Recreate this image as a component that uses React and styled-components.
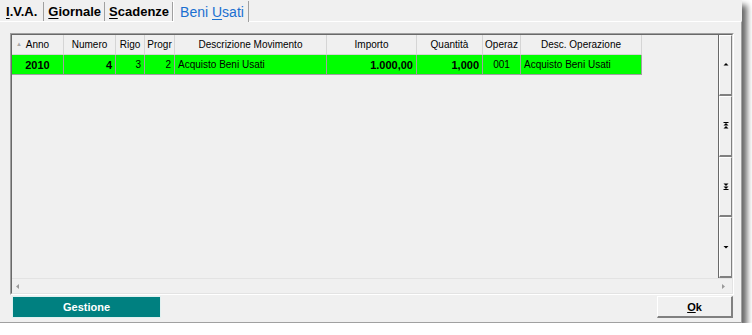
import React from 'react'
import styled, { createGlobalStyle } from 'styled-components'

const GlobalStyle = createGlobalStyle`
  html, body {
    margin: 0;
    padding: 0;
    background: #ffffff;
    font-family: "Liberation Sans", Arial, sans-serif;
  }
`

const Window = styled.div`
  width: 742px;
  height: 323px;
  background: #f0f0f0;
  box-shadow: 5px 5px 6px rgba(0, 0, 0, 0.6);
  display: flex;
  flex-direction: column;
`

const TabBar = styled.div`
  display: flex;
  align-items: flex-end;
  height: 21px;
  flex-shrink: 0;
  padding-left: 2px;
  box-sizing: border-box;
`

const Tab = styled.div`
  height: ${p => (p.$active ? '21px' : '19px')};
  box-sizing: border-box;
  display: flex;
  align-items: center;
  padding: ${p => (p.$active ? '0 4px 0 6px' : '0 3px 0 4px')};
  font-size: ${p => (p.$active ? '14px' : '13px')};
  font-weight: ${p => (p.$active ? 400 : 700)};
  color: ${p => (p.$active ? '#1a6fd0' : '#000000')};
  border-right: 1px solid #a0a0a0;
  border-left: ${p => (p.$active ? '1px solid #ffffff' : 'none')};
  background: ${p => (p.$active ? '#f0f0f0' : 'transparent')};
  margin-bottom: ${p => (p.$active ? '-1px' : '0')};
  position: relative;
  z-index: ${p => (p.$active ? 1 : 0)};
  white-space: pre;

  &:first-child {
    padding-left: 4px;
    padding-right: 6px;
  }

  u {
    text-decoration: underline;
    text-underline-offset: 2px;
  }
`

const Panel = styled.div`
  flex: 1;
  border-top: 1px solid #ffffff;
  border-right: 1px solid #a0a0a0;
  border-bottom: 1px solid #a0a0a0;
  padding: 11px 7px 4px 10px;
  display: flex;
  flex-direction: column;
  box-sizing: border-box;
`

const GridFrame = styled.div`
  height: 262px;
  flex-shrink: 0;
  box-sizing: border-box;
  border-top: 1px solid #a0a0a0;
  border-left: 1px solid #a0a0a0;
  border-right: 1px solid #ffffff;
  border-bottom: 1px solid #ffffff;
  display: flex;
`

const GridInner = styled.div`
  flex: 1;
  border-top: 1px solid #696969;
  border-left: 1px solid #696969;
  border-right: 1px solid #e3e3e3;
  border-bottom: 1px solid #e3e3e3;
  display: flex;
  flex-direction: column;
`

const GridBody = styled.div`
  flex: 1;
  display: flex;
  min-height: 0;
`

const TableArea = styled.div`
  flex: 1;
  font-size: 10px;
  color: #000;
`

const Row = styled.div`
  display: flex;
  height: 20px;
`

const HeadCell = styled.div`
  width: ${p => p.$w}px;
  box-sizing: border-box;
  display: flex;
  align-items: center;
  justify-content: center;
  border-right: 1px solid #d5d5d5;
  border-bottom: 1px solid #d5d5d5;
  background: #f0f0f0;
  position: relative;
  white-space: nowrap;
  overflow: hidden;
`

const SortMark = styled.span`
  position: absolute;
  left: 4px;
  top: 6px;
  font-size: 6px;
  color: #a8a8a8;
`

const Cell = styled.div`
  width: ${p => p.$w}px;
  box-sizing: border-box;
  display: flex;
  align-items: center;
  justify-content: ${p => p.$align || 'flex-start'};
  padding: 0 3px;
  background: #00ff00;
  border-right: 1px solid #a0a0a0;
  border-bottom: 1px solid #a0a0a0;
  font-weight: ${p => (p.$bold ? 700 : 400)};
  font-size: ${p => (p.$bold ? '11px' : '10px')};
  white-space: nowrap;
  overflow: hidden;
`

const VScroll = styled.div`
  width: 13px;
  display: flex;
  flex-direction: column;
  border-left: 1px solid #696969;
`

const ScrollButton = styled.div`
  flex: 1;
  box-sizing: border-box;
  border-top: 1px solid #ffffff;
  border-left: 1px solid #ffffff;
  border-right: 1px solid #808080;
  border-bottom: 2px solid #808080;
  background: #f0f0f0;
  display: flex;
  align-items: center;
  justify-content: center;
`

const HScroll = styled.div`
  height: 14px;
  border-top: 1px solid #e3e3e3;
  display: flex;
  align-items: center;
  justify-content: space-between;
  padding: 0 6px 0 4px;
  background: #f0f0f0;
`

const Footer = styled.div`
  display: flex;
  justify-content: space-between;
  margin-top: 1px;
  padding-left: 2px;
`

const GestioneButton = styled.button`
  width: 149px;
  height: 22px;
  background: #008080;
  color: #ffffff;
  border: 1px solid #e0f0f0;
  font-family: "Liberation Sans", Arial, sans-serif;
  font-size: 11px;
  font-weight: 700;
  padding: 0;
`

const OkButton = styled.button`
  width: 76px;
  height: 22px;
  background: #f0f0f0;
  color: #000;
  border-top: 1px solid #ffffff;
  border-left: 1px solid #ffffff;
  border-right: 2px solid #808080;
  border-bottom: 2px solid #808080;
  font-family: "Liberation Sans", Arial, sans-serif;
  font-size: 11px;
  font-weight: 700;
  padding: 0;
  margin-right: 1px;

  u {
    text-underline-offset: 1px;
  }
`

const Arrow = ({ dir, double }) => {
  const up = dir === 'up'
  const tri = y => (up ? `M0.5 ${y + 2.5} L3 ${y} L5.5 ${y + 2.5} Z` : `M0.5 ${y} L3 ${y + 2.5} L5.5 ${y} Z`)
  return (
    <svg width="6" height="7" viewBox="0 0 6 7">
      {double ? (
        <>
          <path d={tri(up ? 1 : 0.5)} fill="#000" />
          <path d={tri(up ? 4 : 3.5)} fill="#000" />
          <rect x="0.5" y={up ? 0 : 6} width="5" height="1" fill="#000" />
        </>
      ) : (
        <path d={tri(2)} fill="#000" />
      )}
    </svg>
  )
}

const SideArrow = ({ dir }) => (
  <svg width="4" height="7" viewBox="0 0 4 7">
    <path d={dir === 'left' ? 'M3 1 L0 3.5 L3 6 Z' : 'M0 1 L3 3.5 L0 6 Z'} fill="#9a9a9a" />
  </svg>
)

const columns = [
  { key: 'anno', label: 'Anno', w: 52, align: 'center', bold: true, sort: true },
  { key: 'numero', label: 'Numero', w: 52, align: 'flex-end', bold: true },
  { key: 'rigo', label: 'Rigo', w: 29, align: 'flex-end' },
  { key: 'progr', label: 'Progr', w: 30, align: 'flex-end' },
  { key: 'descr', label: 'Descrizione Movimento', w: 152 },
  { key: 'importo', label: 'Importo', w: 90, align: 'flex-end', bold: true },
  { key: 'qta', label: 'Quantità', w: 66, align: 'flex-end', bold: true },
  { key: 'operaz', label: 'Operaz', w: 38, align: 'center' },
  { key: 'descOp', label: 'Desc. Operazione', w: 121 },
]

const rows = [
  {
    anno: '2010',
    numero: '4',
    rigo: '3',
    progr: '2',
    descr: 'Acquisto Beni Usati',
    importo: '1.000,00',
    qta: '1,000',
    operaz: '001',
    descOp: 'Acquisto Beni Usati',
  },
]

export default function App() {
  return (
    <>
      <GlobalStyle />
      <Window>
        <TabBar>
          <Tab><span><u>I</u>.V.A.</span></Tab>
          <Tab><span><u>G</u>iornale</span></Tab>
          <Tab><span><u>S</u>cadenze</span></Tab>
          <Tab $active><span>Beni <u>U</u>sati</span></Tab>
        </TabBar>
        <Panel>
          <GridFrame>
            <GridInner>
              <GridBody>
                <TableArea>
                  <Row>
                    {columns.map(c => (
                      <HeadCell key={c.key} $w={c.w}>
                        {c.sort && <SortMark>▲</SortMark>}
                        {c.label}
                      </HeadCell>
                    ))}
                  </Row>
                  {rows.map((r, i) => (
                    <Row key={i}>
                      {columns.map(c => (
                        <Cell key={c.key} $w={c.w} $align={c.align} $bold={c.bold}>
                          {r[c.key]}
                        </Cell>
                      ))}
                    </Row>
                  ))}
                </TableArea>
                <VScroll>
                  <ScrollButton><Arrow dir="up" /></ScrollButton>
                  <ScrollButton><Arrow dir="up" double /></ScrollButton>
                  <ScrollButton><Arrow dir="down" double /></ScrollButton>
                  <ScrollButton><Arrow dir="down" /></ScrollButton>
                </VScroll>
              </GridBody>
              <HScroll>
                <SideArrow dir="left" />
                <SideArrow dir="right" />
              </HScroll>
            </GridInner>
          </GridFrame>
          <Footer>
            <GestioneButton>Gestione</GestioneButton>
            <OkButton><u>O</u>k</OkButton>
          </Footer>
        </Panel>
      </Window>
    </>
  )
}
